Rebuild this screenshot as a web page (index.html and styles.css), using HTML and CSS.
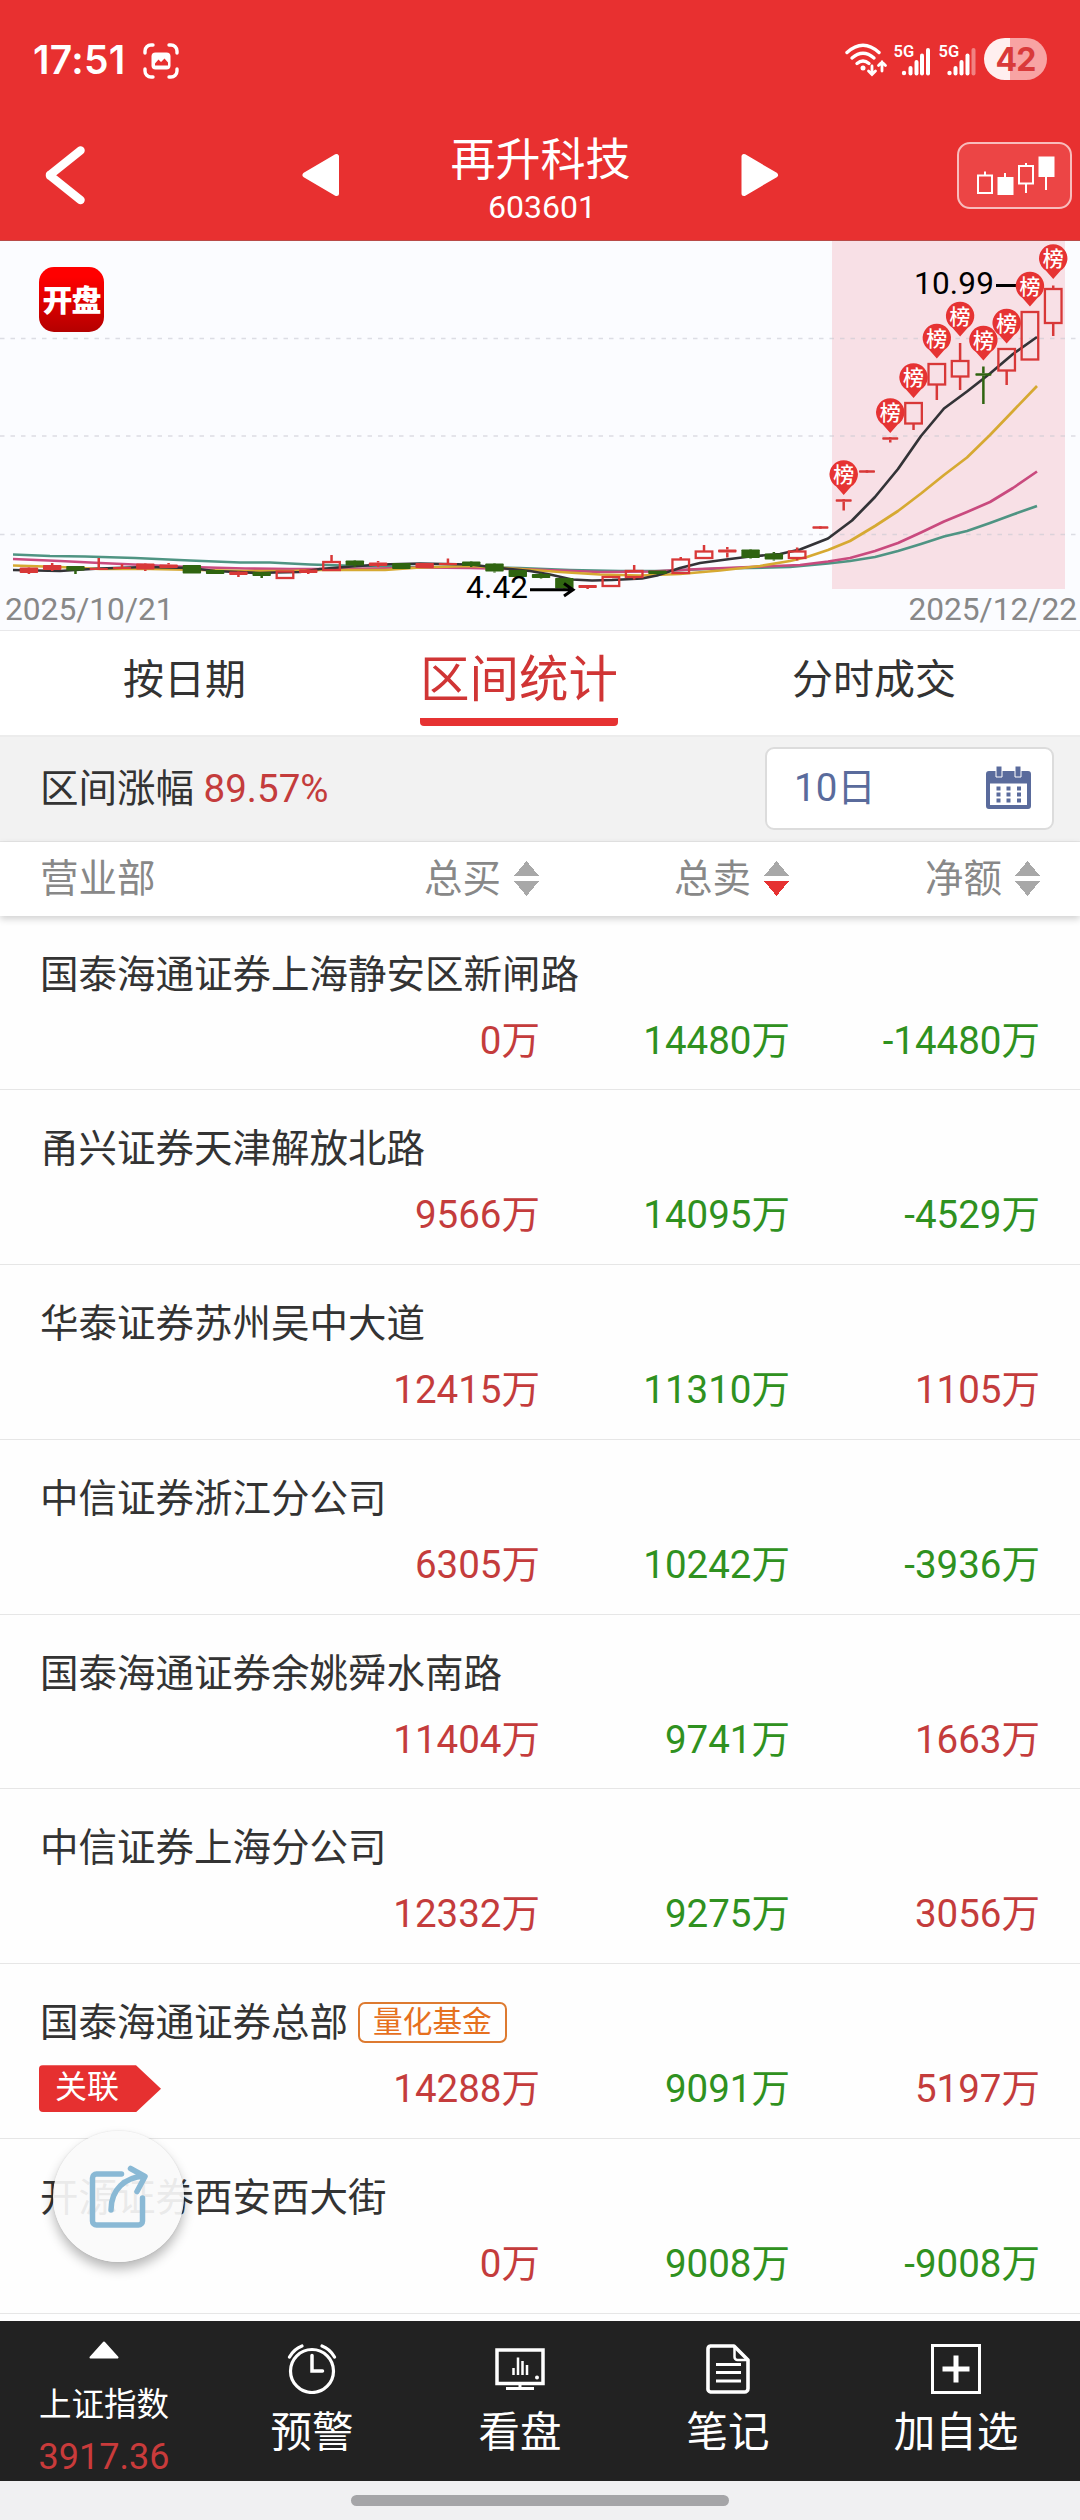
FILE: index.html
```html
<!DOCTYPE html>
<html lang="zh-CN">
<head>
  <meta charset="UTF-8">
  <title>再升科技 603601</title>
  <link rel="stylesheet" href="styles.css">
</head>
<body>
  <header class="top">
    <div class="status">
      <span class="time">17:51</span>
      <svg class="shot" width="36" height="36" viewBox="0 0 36 36">
        <path d="M2 10V8a6 6 0 0 1 6-6h2M26 2h2a6 6 0 0 1 6 6v2M34 26v2a6 6 0 0 1-6 6h-2M10 34H8a6 6 0 0 1-6-6v-2" fill="none" stroke="#fff" stroke-width="3.4" stroke-linecap="round"/>
        <rect x="8.5" y="9.5" width="19" height="17" rx="4" fill="#fff"/>
        <path d="M12 22.5v-2l3.5-4 2.5 2.5 3.5-3.5 3.5 4v3z" fill="#e83030"/>
      </svg>
      <svg class="signals" width="132" height="44" viewBox="0 0 132 44">
        <g fill="none" stroke="#fff" stroke-width="3.4" stroke-linecap="round">
          <path d="M3 15.5Q19 1 35 15.5"/>
          <path d="M8 21Q19 11.5 30 21"/>
          <path d="M13 26.5Q19 21.5 25 26.5"/>
          <path d="M28 29v8M24.5 34l3.500 3.500 3.500-3.500M38 34v-9M34.500 28.500 38 25l3.500 3.500" stroke-width="2.8"/>
        </g>
        <circle cx="19" cy="31" r="2.5" fill="#fff"/>
        <g fill="#fff">
          <text x="49.5" y="20" class="net">5G</text>
          <circle cx="60" cy="36" r="2.2"/>
          <rect x="64.5" y="29" width="4" height="9.5" rx="2"/>
          <rect x="70.5" y="23" width="4" height="15.5" rx="2"/>
          <rect x="76" y="16.5" width="4" height="22" rx="2"/>
          <rect x="82" y="11" width="4" height="27.5" rx="2"/>
          <text x="94.5" y="20" class="net">5G</text>
          <circle cx="105.5" cy="36" r="2.2"/>
          <rect x="109.5" y="29" width="4" height="9.5" rx="2"/>
          <rect x="115.5" y="23" width="4" height="15.5" rx="2"/>
          <rect x="121.5" y="16.5" width="4" height="22" rx="2"/>
          <rect x="127.5" y="11" width="4" height="27.5" rx="2" opacity=".4"/>
        </g>
      </svg>
      <span class="battery">42</span>
    </div>
    <nav class="nav">
      <svg class="back" width="44" height="60" viewBox="0 0 44 60"><path d="M36.500 5.500 6.500 29.500a.8.8 0 0 0 0 1.500L36.500 55" fill="none" stroke="#fff" stroke-width="8.5" stroke-linecap="round" stroke-linejoin="round"/></svg>
      <svg class="prev" width="38" height="44" viewBox="0 0 38 44"><path d="M34.500 3.500v37L3 22z" fill="#fff" stroke="#fff" stroke-width="5" stroke-linejoin="round"/></svg>
      <div class="stock">
        <h1>再升科技</h1>
        <p>603601</p>
      </div>
      <svg class="next" width="38" height="44" viewBox="0 0 38 44"><path d="M3 3.500v37L34.500 22z" fill="#fff" stroke="#fff" stroke-width="5" stroke-linejoin="round"/></svg>
      <div class="kline-btn">
        <svg width="80" height="44" viewBox="0 0 80 44">
          <g fill="none" stroke="#fff" stroke-width="2">
            <path d="M2 21.5h14v17.5H2zM9 21.5v-4M43 12h14v17.5H43zM50 12v-3M50 29.5v9.5M29 23v-4M70 23v13"/>
          </g>
          <path d="M21.5 23h16v18h-16zM62.5 2.500h16v20.500h-16z" fill="#fff"/>
        </svg>
      </div>
    </nav>
  </header>

  <section class="chart">
    <svg id="kline" width="1080" height="389" viewBox="0 241 1080 389"></svg>
    <div class="logo">开盘</div>
    <div class="dates"><span>2025/10/21</span><span>2025/12/22</span></div>
  </section>

  <div class="tabs">
    <span>按日期</span>
    <span class="active">区间统计</span>
    <span>分时成交</span>
  </div>

  <div class="range">
    <span class="label">区间涨幅 <b>89.57%</b></span>
    <div class="picker">
      <span class="label">10日</span>
      <svg width="45" height="43" viewBox="0 0 45 43">
        <path d="M3 5h39a3 3 0 0 1 3 3v32a3 3 0 0 1-3 3H3a3 3 0 0 1-3-3V8a3 3 0 0 1 3-3zM4 17.500v21.500h37V17.500z" fill="#5a6b9c" fill-rule="evenodd"/>
        <path d="M10 0h6v11h-6zM29 0h6v11h-6z" fill="#5a6b9c" stroke="#fff" stroke-width="1"/>
        <path d="M12.500 20.500v17M22.500 20.500v17M33 20.500v17" stroke="#5a6b9c" stroke-width="4" stroke-dasharray="4 2"/>
      </svg>
    </div>
  </div>

  <div class="thead">
    <span class="dept">营业部</span>
    <span class="col">总买<i class="sort"></i></span>
    <span class="col">总卖<i class="sort down"></i></span>
    <span class="col">净额<i class="sort"></i></span>
  </div>

  <main class="list">
    <div class="row">
      <div class="name">国泰海通证券上海静安区新闸路</div>
      <div class="nums"><span></span><span class="red">0万</span><span class="green">14480万</span><span class="green">-14480万</span></div>
    </div>
    <div class="row">
      <div class="name">甬兴证券天津解放北路</div>
      <div class="nums"><span></span><span class="red">9566万</span><span class="green">14095万</span><span class="green">-4529万</span></div>
    </div>
    <div class="row">
      <div class="name">华泰证券苏州吴中大道</div>
      <div class="nums"><span></span><span class="red">12415万</span><span class="green">11310万</span><span class="red">1105万</span></div>
    </div>
    <div class="row">
      <div class="name">中信证券浙江分公司</div>
      <div class="nums"><span></span><span class="red">6305万</span><span class="green">10242万</span><span class="green">-3936万</span></div>
    </div>
    <div class="row">
      <div class="name">国泰海通证券余姚舜水南路</div>
      <div class="nums"><span></span><span class="red">11404万</span><span class="green">9741万</span><span class="red">1663万</span></div>
    </div>
    <div class="row">
      <div class="name">中信证券上海分公司</div>
      <div class="nums"><span></span><span class="red">12332万</span><span class="green">9275万</span><span class="red">3056万</span></div>
    </div>
    <div class="row">
      <div class="name">国泰海通证券总部<em class="tag">量化基金</em></div>
      <div class="nums"><span><i class="link">关联</i></span><span class="red">14288万</span><span class="green">9091万</span><span class="red">5197万</span></div>
    </div>
    <div class="row">
      <div class="name">开源证券西安西大街</div>
      <div class="nums"><span></span><span class="red">0万</span><span class="green">9008万</span><span class="green">-9008万</span></div>
    </div>
  </main>

  <div class="share">
    <svg width="64" height="68" viewBox="0 0 64 68" fill="none" stroke="#8ab9d5" stroke-width="5.5" stroke-linecap="round" stroke-linejoin="round">
      <path d="M33.500 9H8.500a4 4 0 0 0-4 4v43a4 4 0 0 0 4 4h42a4 4 0 0 0 4-4V33"/>
      <path d="M23 45C23 24 37 12.500 56 11M42.500 3.500 57 11.500 49 26.500"/>
    </svg>
  </div>

  <footer class="bar">
    <div class="index">
      <svg width="30" height="18" viewBox="0 0 30 18"><path d="M15 1.500 28.500 16.500h-27z" fill="#fff" stroke="#fff" stroke-width="2" stroke-linejoin="round"/></svg>
      <span>上证指数</span>
      <b>3917.36</b>
    </div>
    <div class="item">
      <svg width="50" height="50" viewBox="0 0 50 50" fill="none" stroke="#fff" stroke-width="3.2" stroke-linecap="round">
        <circle cx="25" cy="27" r="21.5"/>
        <path d="M25 11.500V27h10.500" stroke-width="3.5"/>
        <path d="M2.500 13Q7 5 15 2M35 2q8 3 12.500 11"/>
      </svg>
      <span>预警</span>
    </div>
    <div class="item">
      <svg width="50" height="50" viewBox="0 0 50 50" fill="none" stroke="#fff">
        <path d="M2 6h46v33.500H2z" stroke-width="3.5"/>
        <path d="M25 40v4M11 44.500h28" stroke-width="3"/>
        <path d="M18.500 24v7M23 13.500V31M27.500 17v14M32 21v10" stroke-width="2.5"/>
        <circle cx="42" cy="33.500" r="2" fill="#fff" stroke="none"/>
      </svg>
      <span>看盘</span>
    </div>
    <div class="item">
      <svg width="44" height="50" viewBox="0 0 44 50" fill="none" stroke="#fff" stroke-linejoin="round">
        <path d="M4.500 2H28l14 14v28.500a3.500 3.500 0 0 1-3.500 3.500h-34A3 3 0 0 1 2 44.500V5a3 3 0 0 1 2.500-3z" stroke-width="3.6"/>
        <path d="M28.500 3v10a3 3 0 0 0 3 3H41" stroke-width="2.5"/>
        <path d="M10 20.500h25M10 28.500h25M10 37h25" stroke-width="3"/>
      </svg>
      <span>笔记</span>
    </div>
    <div class="item add">
      <svg width="50" height="50" viewBox="0 0 50 50" fill="none" stroke="#fff">
        <path d="M1.500 1.500h47v47h-47z" stroke-width="3"/>
        <path d="M25 11.500v27M11.500 25h27" stroke-width="5"/>
      </svg>
      <span>加自选</span>
    </div>
  </footer>
  <div class="home"><i></i></div>

  <script src="chart.js"></script>
</body>
</html>
```

FILE: chart.js
```js
// candle: [type, body top, body bottom, high, low]
// r = filled red, g = filled green, h = hollow red, x = green cross, "-" = one-price line
const candles = [
  ["r", 567.5, 573, 568, 574], ["r", 565, 570, 563, 571], ["g", 566, 570.5, 566, 574],
  ["r", 568, 570, 558, 570], ["r", 567, 569, 564, 569], ["r", 563.5, 569.5, 563, 571],
  ["r", 564.5, 568, 563, 568], ["g", 565, 573.5, 565, 573.5], ["g", 570, 574, 570, 573.5],
  ["r", 571.5, 575, 571, 577], ["g", 572, 576, 572, 578], ["h", 571.5, 578, 571, 578],
  ["r", 569.5, 573, 569, 574], ["h", 562, 570, 555, 570], ["g", 560.5, 565.5, 560, 567],
  ["r", 562.5, 566, 561, 567], ["g", 563, 569, 563, 568.5], ["r", 563, 568, 563, 567.5],
  ["r", 563, 565, 558.5, 565], ["g", 561.5, 566, 562, 567], ["g", 563.5, 571.5, 564, 572.5],
  ["g", 570, 577, 570, 576.5], ["g", 574, 578, 573, 578.5], ["g", 578, 588.5, 578, 588],
  ["r", 585, 588, 585, 589], ["h", 577, 586, 576, 586], ["h", 571, 577, 565, 579.5],
  ["g", 570.5, 574, 570.5, 574.5], ["h", 559.5, 573, 557, 573], ["h", 551.5, 558, 545, 558],
  ["r", 549.5, 552.5, 547, 557.5], ["g", 549.5, 558, 550, 558.5], ["g", 553.5, 559.5, 552, 560.5],
  ["h", 551.5, 558, 547.5, 560.5], ["-", 526.3, 528.7, 527, 528], ["-", 499.3, 501.7, 500, 510.5],
  ["-", 470.3, 472.7, 471, 472], ["-", 437.3, 439.7, 438, 442.5], ["h", 403, 423.5, 403, 430],
  ["h", 364, 384.5, 364, 400], ["h", 361, 376.5, 343, 390], ["x", 373.3, 375.7, 366.5, 404],
  ["h", 349, 370.5, 349, 385], ["h", 312, 359.5, 312, 359.5], ["h", 289, 323, 285.5, 336]
];

// moving averages
const averages = [
  ["#4f9483", "13,554.5 50,556 85,556.5 135,558 190,560.5 240,562.5 270,562.5 310,564.5 360,566 420,567 470,567 520,568 570,570 620,571 660,571 720,568.5 790,567 828,563.5 850,561 875,557 898,551 921,544 944,536.5 967,531 990,523 1013,514.5 1037,506"],
  ["#c94a7e", "13,559 60,561 100,563 145,565 190,567 245,568.5 290,569 330,569 380,568.5 420,567.5 470,568 520,569 600,572 650,571.5 700,569 750,567 800,565 828,561.5 850,558 875,551 898,543 921,532.5 944,521.5 967,512 990,502 1013,488 1037,471.5"],
  ["#d6a932", "13,565.5 60,567 100,569 150,569 200,570 245,571 290,571 320,570 360,570 385,570 420,567.5 470,566 520,569 560,572 600,574.5 640,575.5 680,574 720,570.5 760,566 790,561 807,557 828,550 850,541 875,526 898,511 921,493.5 944,475 967,457.5 990,435 1013,411 1037,386"],
  ["#333337", "13,570 60,571 75,570 100,568.5 145,567 190,568 215,571 260,573 275,572.5 300,572 320,569 345,567 380,564.5 420,563.5 470,564.5 500,568 530,571 550,574.5 572,579.5 592,580.5 612,580 642,578.5 657,575.5 680,568 700,563 730,559 750,556.5 780,554 800,549.5 828,538.5 852,520.5 875,497 898,469 921,436 944,408.5 967,391.5 990,373.5 1013,354 1037,337"]
];

// [candle index, top of the pin]
const pins = [[35, 460.5], [37, 398.5], [38, 363.5], [39, 324], [40, 302], [41, 326], [42, 309], [43, 272], [44, 244.5]];

const cx = i => 28.9 + i * 23.28;
let svg = "";

svg += `<rect x="832" y="241" width="233" height="348" fill="#f8e0e6"/>`;
[338.5, 436, 534.5].forEach(y => {
  svg += `<path class="grid" d="M0 ${y}H1080"/>`;
});

averages.forEach(([color, points]) => {
  svg += `<polyline points="${points}" fill="none" stroke="${color}" stroke-width="2.7" stroke-linejoin="round"/>`;
});

candles.forEach(([type, top, bottom, high, low], i) => {
  const x = cx(i);
  const color = type === "g" || type === "x" ? "#2f6410" : "#d83838";
  svg += `<path d="M${x} ${high}V${top}M${x} ${bottom}V${low}" stroke="${color}" stroke-width="2.5"/>`;
  if (type === "h") {
    svg += `<rect x="${x - 8.3}" y="${top}" width="16.6" height="${bottom - top}" fill="none" stroke="${color}" stroke-width="2.3"/>`;
  } else {
    const half = type === "-" || type === "x" ? 8 : 9.2;
    svg += `<rect x="${x - half}" y="${top}" width="${half * 2}" height="${bottom - top}" rx="0.8" fill="${color}"/>`;
  }
});

// lowest and highest price
svg += `<text class="price" x="466" y="597.5" textLength="62">4.42</text>`;
svg += `<path class="mark" d="M530 589.7H573M564 583.5l9 6.2-9 6.2"/>`;
svg += `<text class="price" x="914" y="294" textLength="80">10.99</text>`;
svg += `<path class="mark" d="M996 285.5h22"/>`;

pins.forEach(([i, top]) => {
  const x = cx(i);
  svg += `<path d="M${x} ${top + 34.5}l-7.5-8.5a14.2 14.2 0 1 1 15 0z" fill="#e63333"/>`;
  svg += `<text class="pin" x="${x}" y="${top + 21.5}">榜</text>`;
});

document.getElementById("kline").innerHTML = svg;
```

FILE: styles.css
```css
* {
  box-sizing: border-box;
  margin: 0;
  padding: 0;
}
body {
  width: 1080px;
  height: 2520px;
  overflow: hidden;
  position: relative;
  background: #fefefe;
  color: #333;
  font-family: Roboto, "Noto Sans CJK SC", sans-serif;
  font-size: 38.5px;
}
svg {
  display: block;
  flex: none;
}
i, em {
  font-style: normal;
}
b, h1 {
  font-weight: normal;
}

.top {
  height: 241px;
  background: #e83030;
  border-bottom: 1px solid #b94a48;
  color: #fff;
}
.status {
  display: flex;
  align-items: center;
  height: 118px;
  padding: 0 33px;
}
.time {
  width: 110px;
  font: 600 39px/1 Inter, Roboto, sans-serif;
  letter-spacing: 0.3px;
}
.shot {
  margin-top: 3px;
}
.signals {
  margin-left: auto;
}
.net {
  font: 600 16.5px Roboto, sans-serif;
}
.battery {
  width: 63px;
  height: 42px;
  margin-left: 8px;
  border-radius: 21px;
  background: linear-gradient(90deg, #ffefef 26px, #f8a3a3 26px);
  color: #d93a3a;
  font: 700 32px/43px Inter, Roboto, sans-serif;
  text-align: center;
  letter-spacing: -1px;
}
.nav {
  display: flex;
  align-items: center;
  height: 114px;
  padding: 0 8px 0 44px;
}
.prev {
  margin-left: 214px;
}
.stock {
  width: 401px;
  padding-top: 9px;
  text-align: center;
}
.stock h1 {
  font-size: 45px;
  line-height: 54px;
}
.stock p {
  font-size: 32px;
  line-height: 38px;
  padding-left: 3px;
}
.kline-btn {
  width: 115px;
  height: 67px;
  margin-left: auto;
  padding: 10px 0 0 17px;
  border: 2px solid #f8bcbc;
  border-radius: 13px;
  background: #ec4545;
}

.chart {
  position: relative;
  height: 390px;
  background: #fbfcff;
  border-bottom: 1px solid #e8e8ea;
}
.grid {
  stroke: #c8c8d2;
  stroke-opacity: .6;
  stroke-width: 1.3;
  stroke-dasharray: 4.5 6;
}
.price {
  font: 31.5px Roboto, sans-serif;
}
.mark {
  fill: none;
  stroke: #000;
  stroke-width: 3;
}
.pin {
  fill: #fff;
  font: 500 21px "Noto Sans CJK SC", sans-serif;
  text-anchor: middle;
}
.logo {
  position: absolute;
  left: 39px;
  top: 26px;
  width: 65px;
  height: 65px;
  border-radius: 15px;
  background: linear-gradient(#ff0000 15%, #b40000);
  color: #fff;
  font: 900 29px/58px "Noto Sans CJK SC", sans-serif;
  text-align: center;
}
/* the logo lettering is taller than wide */
.logo {
  font-size: 30px;
  line-height: 63px;
  letter-spacing: -1px;
}
.dates {
  position: absolute;
  left: 5px;
  right: 3px;
  bottom: 0;
  display: flex;
  justify-content: space-between;
  font-size: 31.7px;
  line-height: 40px;
  color: #888;
}

.tabs {
  display: flex;
  justify-content: space-between;
  height: 106px;
  padding: 0 124px 0 123px;
  border-bottom: 2px solid #ececec;
  background: #fff;
  font-size: 41px;
  line-height: 99px;
}
.tabs .active {
  height: 95px;
  border-bottom: 8px solid #e63232;
  border-radius: 4px;
  color: #d03535;
  font-size: 49.5px;
}

.range {
  display: flex;
  align-items: center;
  justify-content: space-between;
  height: 105px;
  padding: 0 26px 0 40px;
  border-bottom: 1px solid #e6e6e6;
  background: #f2f2f2;
}
.range .label {
  padding-bottom: 9px;
}
.range b {
  color: #c43c3c;
}
.picker {
  display: flex;
  align-items: center;
  justify-content: space-between;
  width: 289px;
  height: 83px;
  margin-bottom: 1px;
  padding: 0 21px 0 27px;
  border: 2px solid #dcdcdc;
  border-radius: 9px;
  background: #fff;
  color: #5a6b9c;
}
.picker svg {
  margin-bottom: 2px;
}

.thead {
  position: relative;
  display: grid;
  grid-template-columns: 249px 250px 250px 251px;
  align-items: center;
  height: 74px;
  padding: 0 0 8px 40px;
  background: #fff;
  box-shadow: 0 3px 7px rgba(0, 0, 0, .18);
  color: #888;
}
.col {
  display: flex;
  align-items: center;
  justify-content: flex-end;
}
.sort {
  width: 25px;
  height: 35px;
  margin-left: 13px;
  margin-top: 7px;
  background:
    conic-gradient(from 140deg at 50% 0, #a8a8a8 80deg, transparent 0) top / 25px 15px no-repeat,
    conic-gradient(from -40deg at 50% 100%, #a8a8a8 80deg, transparent 0) bottom / 25px 15px no-repeat;
}
.sort.down {
  background:
    conic-gradient(from 140deg at 50% 0, #a8a8a8 80deg, transparent 0) top / 25px 15px no-repeat,
    conic-gradient(from -40deg at 50% 100%, #e63232 80deg, transparent 0) bottom / 25px 15px no-repeat;
}

.list {
  height: 1405px;
}
.row {
  height: 174.85px;
  padding: 29px 0 0 40px;
  border-bottom: 1px solid #e6e6e6;
}
.row:first-child {
  height: 174px;
}
.name {
  display: flex;
  align-items: center;
  height: 60px;
  line-height: 60px;
}
.nums {
  display: grid;
  grid-template-columns: 250px 250px 250px 250px;
  height: 70px;
  line-height: 71px;
  text-align: right;
}
.red {
  color: #c43c3c;
}
.green {
  color: #2f9120;
}
.tag {
  height: 41px;
  margin: 0 0 2px 10px;
  padding: 0 13px;
  border: 2px solid #dd7a30;
  border-radius: 7px;
  color: #e6701e;
  font-size: 29.7px;
  line-height: 36px;
}
.link {
  display: block;
  width: 122px;
  height: 47px;
  margin: 12px 0 0 -1px;
  padding-left: 16px;
  border-radius: 4px;
  background: #e63030;
  clip-path: polygon(0 0, 97px 0, 100% 50%, 97px 100%, 0 100%);
  color: #fff;
  font-size: 32px;
  line-height: 45px;
  text-align: left;
}

/* floats over the list */
.share {
  position: absolute;
  left: 53px;
  top: 2131px;
  width: 131px;
  height: 131px;
  padding: 34px 0 0 35px;
  border-radius: 50%;
  background: rgba(250, 250, 250, .92);
  box-shadow: 0 7px 12px rgba(0, 0, 0, .28), 0 0 2px rgba(0, 0, 0, .12);
}

.bar {
  display: grid;
  grid-template-columns: 208px 208px 208px 208px 248px;
  height: 160px;
  background: #222;
  color: #fff;
}
.index {
  display: flex;
  flex-direction: column;
  align-items: center;
  padding-top: 20px;
  font-size: 32.5px;
}
.index span {
  margin-top: 21px;
  line-height: 50px;
}
.index b {
  color: #c93b3b;
  font-size: 36px;
  line-height: 56px;
  margin-top: -1px;
}
.item {
  display: flex;
  flex-direction: column;
  align-items: center;
  padding-top: 23px;
  font-size: 41.5px;
  line-height: 78px;
}
.home {
  height: 39px;
  padding-top: 14px;
  background: #f0f0f2;
}
.home i {
  display: block;
  width: 378px;
  height: 11px;
  margin: 0 auto;
  border-radius: 6px;
  background: #a5a5a8;
}
```
